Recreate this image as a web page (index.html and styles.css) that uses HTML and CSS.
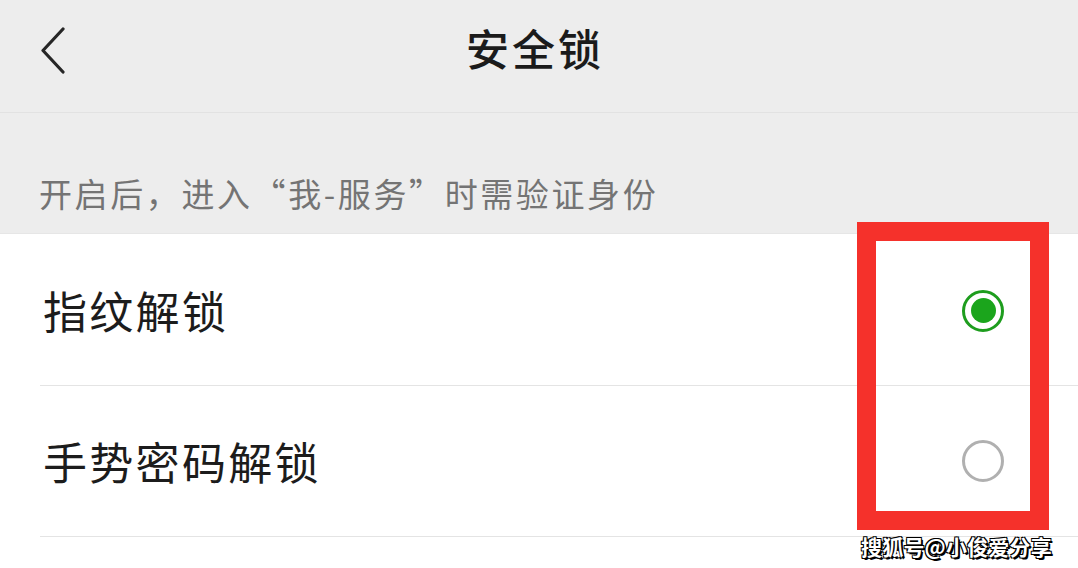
FILE: index.html
```html
<!DOCTYPE html>
<html lang="zh-CN">
<head>
<meta charset="utf-8">
<title>安全锁</title>
<link rel="stylesheet" href="styles.css">
</head>
<body>
<div class="page">
  <header class="topbar">
    <div class="back">
      <svg width="26" height="48" viewBox="0 0 26 48"><path d="M23 2 L3 23.5 L23 45" fill="none" stroke="#262626" stroke-width="3.2" stroke-linecap="round" stroke-linejoin="round"/></svg>
    </div>
    <h1 class="title">安全锁</h1>
    <div class="spacer"></div>
  </header>
  <div class="hint">开启后，进入“我-服务”时需验证身份</div>
  <ul class="list">
    <li class="row">
      <span class="label">指纹解锁</span>
      <span class="radio on"><span class="dot"></span></span>
    </li>
    <li class="row">
      <span class="label">手势密码解锁</span>
      <span class="radio"></span>
    </li>
  </ul>
  <div class="highlight"></div>
  <div class="watermark">搜狐号@小俊爱分享</div>
</div>
</body>
</html>
```

FILE: styles.css
```css
* { box-sizing: border-box; }
html, body { margin: 0; padding: 0; }
body {
  width: 1078px;
  height: 568px;
  overflow: hidden;
  background: #ffffff;
  font-family: "Noto Sans CJK SC", "Noto Sans", sans-serif;
}
.page { position: relative; width: 1078px; height: 568px; }

.topbar {
  height: 113px;
  background: #ededed;
  border-bottom: 1px solid #e2e2e2;
  display: grid;
  grid-template-columns: 1fr auto 1fr;
  align-items: center;
  padding-bottom: 18px;
}
.back { padding-left: 40px; display: flex; align-items: center; padding-top: 8px; }
.back svg { display: block; }
.title {
  margin: 0;
  font-size: 43px;
  font-weight: 500;
  color: #1b1b1b;
  letter-spacing: 3px;
  margin-right: 8px;
}

.hint {
  height: 121px;
  background: #ededed;
  padding-left: 39px;
  padding-top: 56px;
  font-size: 33px;
  line-height: 48px;
  color: #747474;
  letter-spacing: 2.6px;
  white-space: nowrap;
  border-bottom: 1px solid #e6e6e6;
}

.list { list-style: none; margin: 0; padding: 0; background: #fff; }
.row {
  height: 151px;
  margin-left: 40px;
  padding-left: 3px;
  padding-right: 74px;
  border-bottom: 1px solid #e4e4e4;
  display: flex;
  align-items: center;
  justify-content: space-between;
}
.row:first-child { height: 152px; }
.label {
  font-size: 44px;
  color: #1c1c1c;
  letter-spacing: 2.3px;
}
.radio {
  width: 42px;
  height: 42px;
  border-radius: 50%;
  border: 3px solid #b0b0b0;
  display: flex;
  align-items: center;
  justify-content: center;
}
.radio.on { border: 3.5px solid #1e9d1e; margin-top: 2px; }
.radio .dot {
  width: 25px;
  height: 25px;
  border-radius: 50%;
  background: #1ba51c;
}

.highlight {
  position: absolute;
  left: 857px;
  top: 222px;
  width: 192px;
  height: 308px;
  border: 19px solid #f5312b;
}
.watermark {
  position: absolute;
  left: 861px;
  top: 531px;
  font-size: 21px;
  font-weight: 700;
  color: #ffffff;
  letter-spacing: 0.2px;
  text-shadow: 1px 1px 0 #000, -1px -1px 0 #000, 1px -1px 0 #000, -1px 1px 0 #000, 2px 2px 0 #000;
}
```
